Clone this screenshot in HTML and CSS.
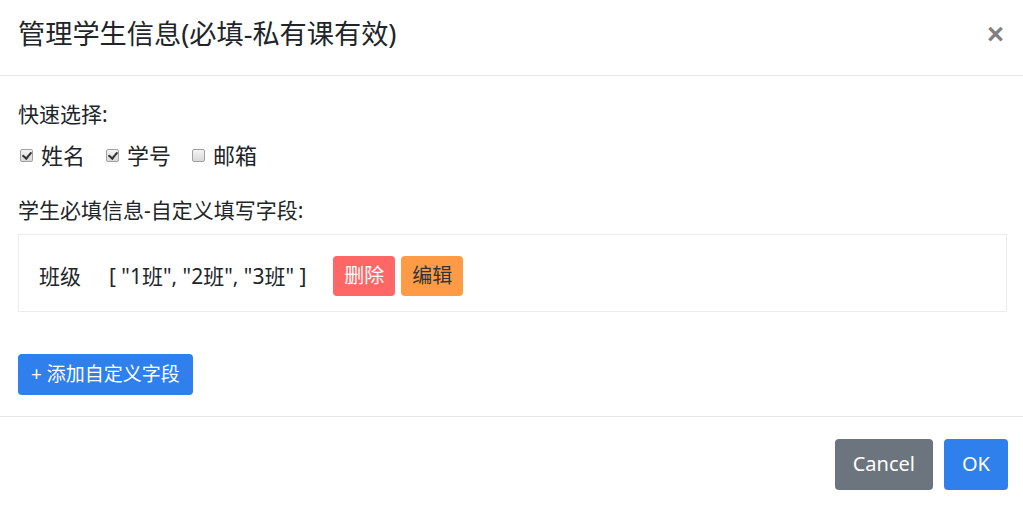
FILE: index.html
```html
<!DOCTYPE html>
<html lang="zh-CN">
<head>
    <meta charset="UTF-8">
    <meta name="viewport" content="width=device-width, initial-scale=1.0">
    <title>管理学生信息</title>
    <link rel="stylesheet" href="styles.css">
</head>
<body>

    <div class="modal">
        <div class="modal-header">
            <h4 class="modal-title">管理学生信息(必填-私有课有效)</h4>
            <button class="close" type="button">&times;</button>
        </div>

        <div class="modal-body">
            <div class="label">快速选择:</div>
            <div class="check-row">
                <label><input type="checkbox" checked> 姓名</label>
                <label><input type="checkbox" checked> 学号</label>
                <label><input type="checkbox"> 邮箱</label>
            </div>

            <div class="label section">学生必填信息-自定义填写字段:</div>
            <div class="field-box">
                <span class="field-name">班级</span>
                <span class="field-values">[ "1班", "2班", "3班" ]</span>
                <button class="btn btn-danger">删除</button>
                <button class="btn btn-warning">编辑</button>
            </div>

            <button class="btn btn-primary btn-add">+ 添加自定义字段</button>
        </div>

        <div class="modal-footer">
            <button class="btn btn-secondary btn-lg">Cancel</button>
            <button class="btn btn-primary btn-lg">OK</button>
        </div>
    </div>

</body>
</html>
```

FILE: styles.css
```css
:root {
    --text-color: #212529;
    --line-color: #e5e5e5;
    --box-border: #ececec;
    --blue: #2f80ed;
    --grey: #6c757d;
    --red: #ff6666;
    --orange: #ff9b47;
}

body {
    margin: 0;
    font-family: "Noto Sans", "Noto Sans CJK SC", sans-serif;
    font-size: 21px;
    line-height: 1.45;
    color: var(--text-color);
    background: #fff;
}

.modal-header {
    display: flex;
    align-items: center;
    justify-content: space-between;
    height: 76px;
    padding: 0 19px 6px 18px;
    box-sizing: border-box;
    border-bottom: 1px solid var(--line-color);
}

.modal-title {
    margin: 0;
    font-size: 27.2px;
    font-weight: normal;
    line-height: 1.2;
}

.close {
    padding: 0;
    border: none;
    background: none;
    font-family: "Liberation Sans", sans-serif;
    font-size: 29px;
    font-weight: bold;
    line-height: 1;
    color: #808080;
    cursor: pointer;
}

.modal-body {
    padding: 23px 16px 21px 18px;
}

.check-row {
    display: flex;
    gap: 19px;
    margin-top: 11px;
    font-size: 22px;
    line-height: 30px;
}

.check-row label {
    display: flex;
    align-items: center;
    gap: 8px;
}

.check-row input {
    appearance: none;
    position: relative;
    width: 13px;
    height: 13px;
    margin: 0 0 0 2px;
    border: 1px solid #a0a0a0;
    border-radius: 2px;
    background: linear-gradient(#f4f4f4, #d8d8d8);
}

.check-row input:checked::after {
    content: "";
    position: absolute;
    left: 3px;
    top: 0;
    width: 4px;
    height: 7px;
    border: solid #333;
    border-width: 0 2px 2px 0;
    transform: rotate(40deg);
}

.section {
    margin-top: 25px;
}

.field-box {
    display: flex;
    align-items: center;
    margin-top: 8px;
    padding: 21px 20px 15px;
    border: 1px solid var(--box-border);
}

.field-name {
    margin-right: 28px;
}

.field-values {
    margin-right: 27px;
}

.btn {
    border: none;
    border-radius: 4px;
    font-family: inherit;
    font-size: 19px;
    line-height: 1.5;
    cursor: pointer;
}

.field-box .btn {
    height: 40px;
    padding: 0 11px;
    margin-right: 6px;
    font-size: 20px;
}

.btn-danger {
    background: var(--red);
    color: #fff;
}

.btn-warning {
    background: var(--orange);
    color: #333;
}

.btn-primary {
    background: var(--blue);
    color: #fff;
}

.btn-secondary {
    background: var(--grey);
    color: #fff;
}

.btn-add {
    display: block;
    height: 41px;
    margin-top: 42px;
    padding: 0 13px;
}

.modal-footer {
    display: flex;
    justify-content: flex-end;
    gap: 11px;
    padding: 22px 15px 15px;
    border-top: 1px solid var(--line-color);
}

.btn-lg {
    height: 51px;
    padding: 0 18px;
    font-size: 20px;
}
```
